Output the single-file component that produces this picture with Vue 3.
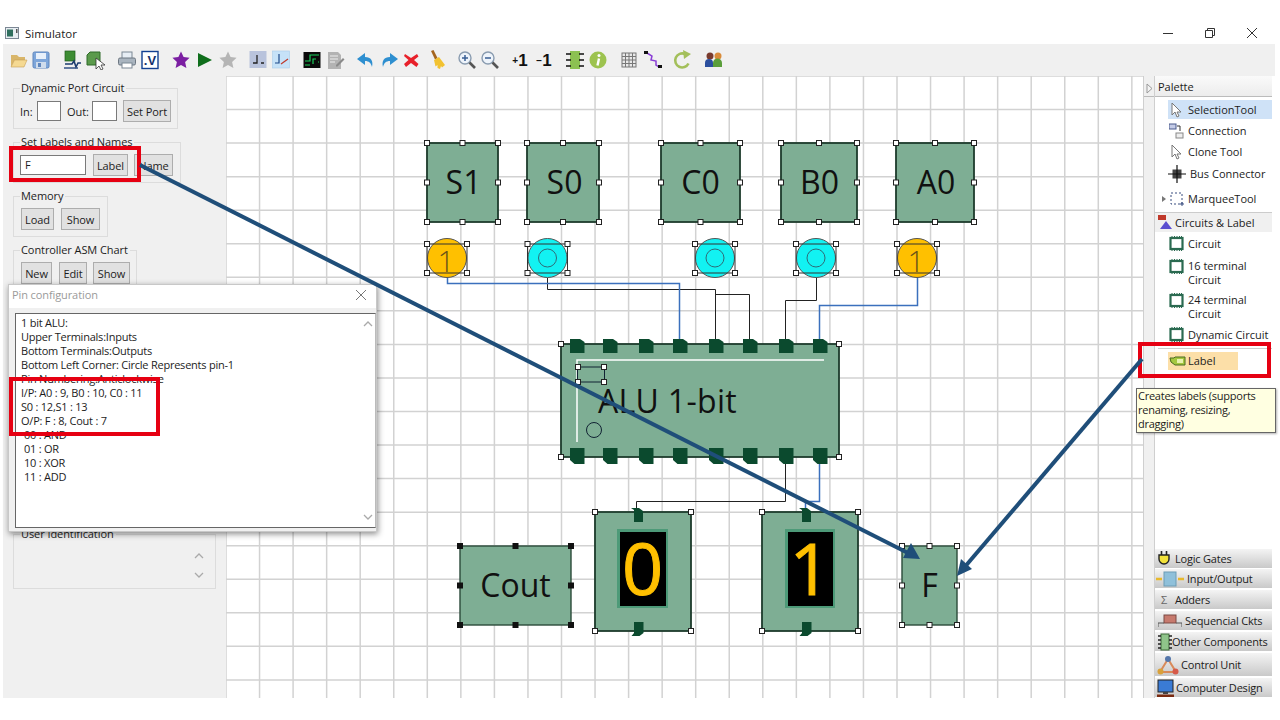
<script setup>
const centers = [19,41,72,95,127,150,181,205,228,258,281,312,335,365,390,411,437,467,490,520,544,575,598,629,653,683,714]
const art = [
 `<path d="M2 5h6l2 2h6v3H2z" fill="#d9b66a"/><path d="M2 17V8h12v2H6l-4 7z" fill="#d9b66a"/><path d="M2 17l3.500-7H18l-3 7z" fill="#f5d992" stroke="#c89f55" stroke-width=".6"/>`,
 `<rect x="2" y="2" width="16" height="16" rx="1.500" fill="#7ea6da" stroke="#5f86bd"/><rect x="5" y="3" width="10" height="6" fill="#e8f0fa"/><rect x="5" y="12" width="10" height="6" fill="#cfdcec"/><rect x="7" y="13" width="3" height="4" fill="#5f86bd"/>`,
 `<rect x="3" y="1" width="10" height="10" fill="#3d8c33" stroke="#1f5c1a" stroke-width=".7"/><path d="M3 14h7l2-3 2 6 2-4h3" fill="none" stroke="#1c3c6e" stroke-width="1.600"/><path d="M2 18h14" stroke="#24467d" stroke-width="1.400"/>`,
 `<path d="M2 5l3-3h10v13H2z" fill="#5b9a4c" stroke="#2f6b28"/><path d="M11 8v11l3-3 2 4 2-1-2-4h4z" fill="#fff" stroke="#333" stroke-width=".8"/>`,
 `<rect x="5" y="2" width="10" height="7" fill="#e6edf4" stroke="#7b8794"/><rect x="1.500" y="8" width="17" height="7" rx="1.500" fill="#a9b4bf" stroke="#6d7782"/><rect x="5" y="13" width="10" height="5" fill="#fff" stroke="#7b8794"/>`,
 `<rect x="2" y="1.500" width="16" height="17" fill="#fff" stroke="#123f91" stroke-width="1.400"/><text x="10" y="15" text-anchor="middle" font-family="Liberation Sans" font-weight="700" font-size="13" fill="#15306c">.V</text>`,
 `<path d="M10 1.500l2.600 5.600 6 .7-4.500 4.100 1.300 6L10 15l-5.400 2.900 1.300-6L1.400 7.800l6-.7z" fill="#7b1fa2"/>`,
 `<path d="M3 3l14 7-14 7z" fill="#0f6e1c"/>`,
 `<path d="M10 1.500l2.600 5.600 6 .7-4.500 4.100 1.300 6L10 15l-5.400 2.900 1.300-6L1.400 7.800l6-.7z" fill="#b5b5b5"/>`,
 `<rect x="1.500" y="1" width="17" height="17" fill="#b9c3dc"/><path d="M9 5v8H5M13 13h3" fill="none" stroke="#222" stroke-width="1.300"/>`,
 `<rect x="1.500" y="1" width="17" height="17" fill="#c6e2f8" stroke="#a8cdea" stroke-width=".6"/><path d="M8 4v9H4" fill="none" stroke="#1e4a8a" stroke-width="1.200"/><path d="M10 14l7-5" stroke="#c0392b" stroke-width="1.200"/>`,
 `<rect x="1.500" y="2" width="17" height="16" fill="#0a0a0a"/><path d="M3 11h5V5h9M3 15h5" fill="none" stroke="#18d05a" stroke-width="1.200"/><path d="M11 14V9h3M16 12h1" fill="none" stroke="#18d05a" stroke-width="1.200"/>`,
 `<path d="M3 2h10l3 3v14H3z" fill="#b3b3b3"/><path d="M5 6h8M5 9h8M5 12h5" stroke="#eee"/><path d="M11 15l7-7 1.500 1.500-7 7H11z" fill="#8a8a8a"/>`,
 `<path d="M10 3L2 9l8 6v-4c4 0 6 2 7 6 1.500-6-1-10-7-10z" fill="#2e8fd0"/>`,
 `<path d="M10 3l8 6-8 6v-4c-4 0-6 2-7 6-1.500-6 1-10 7-10z" fill="#2e8fd0"/>`,
 `<path d="M4 4l6 4 6-4 1.500 2.500L13 10l4.500 4-2 3L10 13l-5 4-2-3 4.500-4L3 6z" fill="#e8202a"/>`,
 `<path d="M4 1l2.500-1 4 8-2.500 1.500z" fill="#a5651f"/><path d="M7 10l5-3 6 8-3 2.500-1-1.500-1 3-2.500-1v-3l-2 1.500z" fill="#f2c230"/>`,
 `<circle cx="8" cy="8" r="6" fill="#eef4fb" stroke="#8a9cb0" stroke-width="1.400"/><path d="M12.500 12.500L18 18" stroke="#555" stroke-width="2.600"/><path d="M5 8h6M8 5v6" stroke="#3a5f95" stroke-width="1.500"/>`,
 `<circle cx="8" cy="8" r="6" fill="#eef4fb" stroke="#8a9cb0" stroke-width="1.400"/><path d="M12.500 12.500L18 18" stroke="#555" stroke-width="2.600"/><path d="M5 8h6" stroke="#3a5f95" stroke-width="1.500"/>`,
 `<text x="10" y="15.500" text-anchor="middle" font-family="Liberation Sans" font-weight="700" fill="#111"><tspan font-size="10" dy="-2">+</tspan><tspan font-size="17" dy="2">1</tspan></text>`,
 `<text x="10" y="15.500" text-anchor="middle" font-family="Liberation Sans" font-weight="700" fill="#111"><tspan font-size="10" dy="-2">−</tspan><tspan font-size="17" dy="2">1</tspan></text>`,
 `<rect x="5" y="1" width="10" height="18" fill="#8cc152"/><path d="M1 4h5M14 4h5M1 10h5M14 10h5M1 16h5M14 16h5" stroke="#111" stroke-width="1.400"/>`,
 `<circle cx="10" cy="10" r="8.500" fill="#9dc34f"/><circle cx="11" cy="5.500" r="1.500" fill="#fff"/><path d="M11 8.500l-1.500 7" stroke="#fff" stroke-width="2.400"/>`,
 `<rect x="3" y="3" width="14" height="14" fill="#e8e8e8" stroke="#777"/><path d="M6.500 3v14M10 3v14M13.500 3v14M3 6.500h14M3 10h14M3 13.500h14" stroke="#777"/>`,
 `<path d="M4 3l5 3-1 4 5 1 0 4 3 2" fill="none" stroke="#8a3fd6" stroke-width="1.500"/><rect x="1" y="1" width="4" height="3" fill="#111"/><rect x="15" y="15" width="4" height="3" fill="#111"/>`,
 `<path d="M15.500 13.500A7 7 0 1 1 12 4" fill="none" stroke="#a3bf5a" stroke-width="2.600"/><path d="M10 0l8 4-7 5z" fill="#a3bf5a"/>`,
 `<circle cx="6" cy="6" r="3.500" fill="#7a3b2e"/><circle cx="14" cy="6" r="3.500" fill="#d98b3a"/><path d="M1 17v-4a4 4 0 0 1 8 0v4z" fill="#2b4f9e"/><path d="M9 17v-4a4 4 0 0 1 9 0v4z" fill="#5a9e3a"/>`
]
const tools = centers.map((c, i) => ({ ml: c - (i ? centers[i - 1] : 3) - (i ? 20 : 10), html: art[i] }))

const step = 33.55
const vLines = Array.from({ length: 28 }, (_, i) => 226 + step * i)
const hLines = Array.from({ length: 19 }, (_, i) => 76 + step * i)

const handles = (x1, y1, x2, y2) => {
  const mx = (x1 + x2) / 2, my = (y1 + y2) / 2
  return [[x1,y1],[mx,y1],[x2,y1],[x1,my],[x2,my],[x1,y2],[mx,y2],[x2,y2]]
}
const inputs = [
  { t: 'S1', x1: 427, x2: 498, tx: 463.5 }, { t: 'S0', x1: 527, x2: 599, tx: 564.5 }, { t: 'C0', x1: 661, x2: 740, tx: 700.5 },
  { t: 'B0', x1: 781, x2: 857, tx: 819.5 }, { t: 'A0', x1: 896, x2: 974, tx: 936 }
].map(b => ({ ...b, y1: 143, y2: 222 }))
const labels = [
  { t: 'Cout', x1: 460, x2: 571, y1: 546, y2: 625, dark: true },
  { t: 'F', x1: 902, x2: 957, y1: 546, y2: 625, dark: false }
]
const probes = [
  { cx: 447, on: true }, { cx: 547.5, on: false }, { cx: 715, on: false }, { cx: 816, on: false }, { cx: 917, on: true }
]
const wiresBlue = ['M447.500 278V283.500H679.500V345', 'M917.500 278V305.500H819.500V345', 'M819.500 458V501.500H805.500V512']
const wiresDark = ['M547.500 278V289.500H715.500V345', 'M715.500 294.500H749.500V345', 'M816.500 278V300.500H785.500V345', 'M785.500 458V501.500H636.500V512']
const pinX = [570, 603, 639, 673, 709, 743, 779, 813]
const displays = [
  { d: '0', x1: 595, x2: 691, ox: 617, ow: 51, pin: 634 },
  { d: '1', x1: 762, x2: 858, ox: 785, ow: 50, pin: 802 }
]
const pinLines = ['1 bit ALU:', 'Upper Terminals:Inputs', 'Bottom Terminals:Outputs', 'Bottom Left Corner: Circle Represents pin-1', 'Pin Numbering:Anticlockwise', 'I/P: A0 : 9, B0 : 10, C0 : 11', 'S0 : 12,S1 : 13', 'O/P: F : 8, Cout : 7']
const opLines = ['00 : AND', '01 : OR', '10 : XOR', '11 : ADD']
const chipTools = [
  { t: 'Circuit', c: 'c1' }, { t: '16 terminal Circuit', c: 'two' }, { t: '24 terminal Circuit', c: 'two' }, { t: 'Dynamic Circuit', c: 'dyn' }
]
</script>

<template>
  <div class="app">
    <header class="title">
      <svg class="appicon" width="15" height="13" viewBox="0 0 15 13"><rect x=".5" y=".5" width="13" height="11" fill="#e8edf2" stroke="#7b8794"/><rect x="2" y="2.500" width="6" height="7" fill="#2f6f5e"/><rect x="11" y="2" width="1.500" height="4" fill="#555"/></svg>
      <span>Simulator</span>
      <div class="winbtns">
        <svg width="12" height="12" viewBox="0 0 12 12"><path d="M1 6.500h10" stroke="#333"/></svg>
        <svg width="12" height="12" viewBox="0 0 12 12"><path d="M1.500 3.500h7v7h-7zM3.500 3.500v-2h7v7h-2" fill="none" stroke="#333"/></svg>
        <svg width="12" height="12" viewBox="0 0 12 12"><path d="M1 1l10 10M11 1L1 11" stroke="#333"/></svg>
      </div>
    </header>

    <nav class="toolbar">
      <svg v-for="(t, i) in tools" :key="i" class="tool-ic" width="20" height="20" viewBox="0 0 20 20" :style="{ marginLeft: t.ml + 'px' }" v-html="t.html"></svg>
    </nav>

    <main class="main">
      <aside class="left">
        <fieldset class="grp g1">
          <legend>Dynamic Port Circuit</legend>
          <div class="row">
            <span class="lb-in">In:</span><span class="field w24"></span>
            <span class="lb-out">Out:</span><span class="field w25"></span>
            <button class="btn w48">Set Port</button>
          </div>
        </fieldset>
        <fieldset class="grp g2">
          <legend>Set Labels and Names</legend>
          <div class="row">
            <span class="field w66">F</span>
            <button class="btn w35 ml7">Label</button>
            <button class="btn w39">Name</button>
          </div>
        </fieldset>
        <fieldset class="grp g3">
          <legend>Memory</legend>
          <div class="row pl1">
            <button class="btn w33">Load</button>
            <button class="btn w39 ml7">Show</button>
          </div>
        </fieldset>
        <fieldset class="grp g4">
          <legend>Controller ASM Chart</legend>
          <div class="row pl1">
            <button class="btn w31">New</button>
            <button class="btn w28 ml7">Edit</button>
            <button class="btn w37">Show</button>
          </div>
        </fieldset>
        <fieldset class="grp g5">
          <legend>User Identification</legend>
          <div class="uid-scroll">
            <svg width="10" height="7" viewBox="0 0 10 7"><path d="M1 6l4-4 4 4" fill="none" stroke="#aaa" stroke-width="1.300"/></svg>
            <svg width="10" height="7" viewBox="0 0 10 7"><path d="M1 1l4 4 4-4" fill="none" stroke="#aaa" stroke-width="1.300"/></svg>
          </div>
        </fieldset>
      </aside>

      <section class="canvas">
        <svg class="board" width="917" height="622" viewBox="226 76 917 622">
          <line v-for="x in vLines" :key="'v' + x" :x1="x" :x2="x" y1="76" y2="698" class="gl" />
          <line v-for="y in hLines" :key="'h' + y" x1="226" x2="1143" :y1="y" :y2="y" class="gl" />

          <path v-for="d in wiresDark" :key="d" :d="d" class="w-dark" />
          <path v-for="d in wiresBlue" :key="d" :d="d" class="w-blue" />

          <g v-for="b in inputs" :key="b.t">
            <rect :x="b.x1" :y="b.y1" :width="b.x2 - b.x1" :height="b.y2 - b.y1" class="node" />
            <text :x="b.tx" y="194" class="big">{{ b.t }}</text>
            <rect v-for="(h, i) in handles(b.x1, b.y1, b.x2, b.y2)" :key="i" :x="h[0] - 2.500" :y="h[1] - 2.500" width="5" height="5" class="hd" />
          </g>

          <g v-for="p in probes" :key="p.cx">
            <circle :cx="p.cx" cy="258" r="19.500" :class="p.on ? 'on' : 'off'" />
            <circle v-if="!p.on" :cx="p.cx" cy="258" r="9" class="off-in" />
            <text v-if="p.on" :x="p.cx - 1" y="272" class="one">1</text>
            <rect :x="p.cx - 20" y="244" width="40" height="29" class="probe-box" />
            <rect v-for="h in [[-20,244],[20,244],[-20,273],[20,273]]" :key="h.join()" :x="p.cx + h[0] - 2.500" :y="h[1] - 2.500" width="5" height="5" class="hd" />
          </g>

          <g>
            <rect x="561" y="344" width="278" height="113" class="node" />
            <path v-for="x in pinX" :key="'t' + x" :d="`M${x} 339h10l4.500 3v11h-14.500z`" class="pin" />
            <path v-for="x in pinX" :key="'b' + x" :d="`M${x} 448h14.500v16h-10l-4.500-4z`" class="pin" />
            <path d="M824 360H577V442" class="chip-line" />
            <rect x="577.500" y="367" width="27" height="15" class="sel" />
            <rect v-for="h in [[578,367],[604,367],[578,382],[604,382]]" :key="h.join()" :x="h[0] - 2.500" :y="h[1] - 2.500" width="5" height="5" class="hd" />
            <circle cx="594" cy="430" r="7.500" class="sel" />
            <text x="667.500" y="413" class="big alu">ALU 1-bit</text>
            <rect v-for="h in [[561,344],[839,344],[561,457],[839,457]]" :key="h.join()" :x="h[0] - 2.500" :y="h[1] - 2.500" width="5" height="5" class="hd" />
          </g>

          <g v-for="l in labels" :key="l.t">
            <rect :x="l.x1" :y="l.y1" :width="l.x2 - l.x1" :height="l.y2 - l.y1" class="node thin" />
            <text :x="(l.x1 + l.x2) / 2" y="597" class="big">{{ l.t }}</text>
            <rect v-for="(h, i) in handles(l.x1, l.y1, l.x2, l.y2)" :key="i" :x="h[0] - 2.500" :y="h[1] - 2.500" width="5" height="5" :class="l.dark ? 'hd-dark' : 'hd'" />
          </g>

          <g v-for="d in displays" :key="d.d">
            <rect :x="d.x1" y="512" :width="d.x2 - d.x1" height="119" class="node" />
            <path :d="`M${d.pin} 522v-12l-3-2h8l4 3v11z`" class="pin" />
            <path :d="`M${d.pin} 622h9.500v11l-4 3h-8l2.500-3z`" class="pin" />
            <rect :x="d.ox" y="529" :width="d.ow" height="79" class="seg-o" />
            <rect :x="d.ox + 3" y="532" :width="d.ow - 5" height="74" class="seg-i" />
            <text :x="d.ox + d.ow / 2" y="595" class="digit">{{ d.d }}</text>
            <rect v-for="h in [[d.x1,512],[d.x2,512],[d.x1,631],[d.x2,631]]" :key="h.join()" :x="h[0] - 2.500" :y="h[1] - 2.500" width="5" height="5" class="hd" />
          </g>
        </svg>
      </section>

      <div class="split">
        <div class="split-head">
          <svg width="7" height="11" viewBox="0 0 7 11"><path d="M1 1l5 4.500L1 10z" fill="#f4f4f4" stroke="#999"/></svg>
        </div>
      </div>

      <aside class="palette">
        <div class="p-head">Palette</div>
        <div class="tool sel-blue">
          <svg width="15" height="16" viewBox="0 0 15 16"><path d="M3 1v12l3-3 2 5 2-1-2-4h4z" fill="#fff" stroke="#777"/></svg><span>SelectionTool</span>
        </div>
        <div class="tool">
          <svg width="15" height="16" viewBox="0 0 15 16"><rect x="0" y="1" width="7" height="5" fill="#c4cbe6" stroke="#4a5a8c"/><rect x="7" y="10" width="7" height="5" fill="#eee" stroke="#888"/><path d="M8 3h3v5" fill="none" stroke="#333"/></svg><span>Connection</span>
        </div>
        <div class="tool">
          <svg width="15" height="16" viewBox="0 0 15 16"><path d="M3 1v12l3-3 2 5 2-1-2-4h4z" fill="#fff" stroke="#777"/></svg><span>Clone Tool</span>
        </div>
        <div class="tool bus">
          <svg width="18" height="18" viewBox="0 0 18 18"><rect x="4.500" y="4.500" width="9" height="9" fill="#444"/><path d="M9 0v18M0 9h18" stroke="#111" stroke-width="1.200"/></svg><span>Bus Connector</span>
        </div>
        <div class="tool marquee">
          <svg class="caret" width="4" height="6" viewBox="0 0 4 6"><path d="M0 0l4 3-4 3z" fill="#777"/></svg>
          <svg width="15" height="16" viewBox="0 0 15 16"><rect x="1" y="2" width="11" height="11" fill="none" stroke="#3a4f80" stroke-dasharray="2 2"/><path d="M10 13h4M12 11v4" stroke="#3a4f80"/></svg><span>MarqueeTool</span>
        </div>
        <div class="p-sec">
          <svg width="15" height="15" viewBox="0 0 15 15"><rect x="0" y="0" width="8" height="5" fill="#c0392b"/><path d="M8 6l6 8H2z" fill="#5b4fd0"/></svg><span>Circuits &amp; Label</span>
        </div>
        <div v-for="c in chipTools" :key="c.t" class="tool" :class="c.c">
          <svg width="15" height="15" viewBox="0 0 15 15"><rect x="1.500" y="2" width="12" height="11" fill="#fff" stroke="#2a6a50" stroke-width="2.200"/><path d="M3 0v2M5.500 0v2M8 0v2M10.500 0v2M12.500 0v2M3 13v2M5.500 13v2M8 13v2M10.500 13v2M12.500 13v2" stroke="#2a6a50"/></svg><span>{{ c.t }}</span>
        </div>
        <div class="p-div"></div>
        <div class="tool sel-orange">
          <svg width="17" height="12" viewBox="0 0 17 12"><path d="M1 3h4l1-1h10v8H6L2 7z" fill="#a5c840" stroke="#4a6a20"/><rect x="8" y="4" width="6" height="4" fill="#e9f2b0"/></svg><span>Label</span>
        </div>
        <div class="p-fill"></div>
        <div class="drawer d-logic">
          <svg width="14" height="15" viewBox="0 0 14 15"><path d="M2 4h10v4a5 5 0 0 1-10 0z" fill="#f2e23a" stroke="#222" stroke-width="1.400"/><path d="M4.500 0v4M9.500 0v4" stroke="#222" stroke-width="1.600"/></svg><span>Logic Gates</span>
        </div>
        <div class="drawer d-io">
          <svg width="28" height="16" viewBox="0 0 28 16"><path d="M0 8h6M22 8h6" stroke="#e8b92c" stroke-width="2.400"/><rect x="8" y="1" width="12" height="14" fill="#8fc0da" stroke="#6c9cb5"/></svg><span>Input/Output</span>
        </div>
        <div class="drawer d-add">
          <span class="sigma">Σ</span><span>Adders</span>
        </div>
        <div class="drawer d-seq">
          <svg width="24" height="14" viewBox="0 0 24 14"><rect x="6" y="1" width="12" height="8" fill="#c77a6e" stroke="#7a4a44"/><path d="M0 13V9h6M24 13V9h-6" fill="none" stroke="#555"/></svg><span>Sequencial Ckts</span>
        </div>
        <div class="drawer d-other">
          <svg width="14" height="18" viewBox="0 0 14 18"><rect x="3" y="1" width="8" height="16" fill="#8fc48a" stroke="#3f6a3a"/><path d="M0 3h3M0 7h3M0 11h3M0 15h3M11 3h3M11 7h3M11 11h3M11 15h3" stroke="#222" stroke-width="1.300"/></svg><span>Other Components</span>
        </div>
        <div class="drawer d-cu">
          <svg width="22" height="20" viewBox="0 0 22 20"><path d="M11 4L3 17h16z" fill="none" stroke="#d98a5a" stroke-width="2"/><circle cx="11" cy="4" r="3" fill="#5577aa"/><circle cx="3.500" cy="16.500" r="3" fill="#d9a13a"/><circle cx="18.500" cy="16.500" r="3" fill="#d65a4a"/></svg><span>Control Unit</span>
        </div>
        <div class="drawer d-cd">
          <svg width="17" height="18" viewBox="0 0 17 18"><rect x="1" y="1" width="15" height="12" fill="#3a7bd5" stroke="#222"/><path d="M0 17h17" stroke="#7a2a10" stroke-width="3"/><path d="M6 13h5v2H6z" fill="#444"/></svg><span>Computer Design</span>
        </div>
      </aside>
    </main>

    <section class="dialog">
      <div class="d-title">
        <span>Pin configuration</span>
        <svg width="12" height="12" viewBox="0 0 12 12"><path d="M1 1l10 10M11 1L1 11" stroke="#777"/></svg>
      </div>
      <div class="d-body">
        <div class="d-text">
          <div class="d-lines">
            <div v-for="l in pinLines" :key="l">{{ l }}</div>
            <div v-for="l in opLines" :key="l" class="op">{{ l }}</div>
          </div>
          <div class="d-scroll">
            <svg width="10" height="7" viewBox="0 0 10 7"><path d="M1 6l4-4 4 4" fill="none" stroke="#aaa" stroke-width="1.300"/></svg>
            <svg width="10" height="7" viewBox="0 0 10 7"><path d="M1 1l4 4 4-4" fill="none" stroke="#aaa" stroke-width="1.300"/></svg>
          </div>
        </div>
      </div>
    </section>

    <div class="tooltip">Creates labels (supports renaming, resizing, dragging)</div>

    <svg class="notes" width="1280" height="720" viewBox="0 0 1280 720">
      <rect x="11" y="148" width="128" height="32" class="red" />
      <rect x="11" y="379" width="147" height="55" class="red" />
      <rect x="1140" y="344" width="129" height="32" class="red" />
      <path d="M140 165L908 553" class="arrow" />
      <path d="M920 559L903 558L911 543z" class="head" />
      <path d="M1142 359L963 569" class="arrow" />
      <path d="M957 576L961 559L972 569z" class="head" />
    </svg>
  </div>
</template>

<style>
html, body { margin: 0; background: #fff; overflow: hidden; }
</style>

<style scoped>
.app {
  position: relative; width: 1280px; height: 720px; overflow: hidden; background: #fff;
  display: flex; flex-direction: column;
  font-family: "Open Sans", "Noto Sans", sans-serif; font-size: 11px; color: #1c1c1c;
}
.title { height: 44px; display: flex; align-items: center; padding: 22px 0 0 5px; box-sizing: border-box; font-size: 11.500px; color: #222; }
.appicon { margin-right: 5px; }
.winbtns { margin-left: auto; display: flex; gap: 30px; padding-right: 22px; }
.toolbar { height: 32px; margin: 0 5px 0 3px; background: #f0f0f0; display: flex; align-items: center; }
.tool-ic { flex: none; }
.main { height: 622px; margin: 0 8px 0 3px; display: flex; background: #f0f0f0; }

.left { width: 223px; flex: none; padding: 4px 0 0 10px; box-sizing: border-box; display: flex; flex-direction: column; align-items: flex-start; letter-spacing: -.08px; }
.grp { margin: 5px 0 0; padding: 4px 0 6px 6px; border: 1px solid #dcdcdc; box-sizing: border-box; min-width: 0; }
.grp legend { margin-left: 0; padding: 0 2px 0 1px; height: 16px; line-height: 16px; white-space: nowrap; }
.g1 { margin-top: 0; width: 165px; }
.g2 { width: 168px; }
.g3 { width: 95px; }
.g4 { width: 124px; }
.g5 { width: 203px; height: 63px; margin-top: 235px; padding: 0 0 0 6px; position: relative; }
.uid-scroll { position: absolute; right: 11px; top: 10px; height: 27px; display: flex; flex-direction: column; justify-content: space-between; }
.row { display: flex; align-items: center; height: 22px; gap: 6px; }
.pl1 { padding-left: 1px; }
.ml7 { margin-left: 1px; }
.lb-in { width: 11px; }
.lb-out { width: 19px; }
.field { background: #fff; border: 1px solid #7a7a7a; height: 20px; line-height: 18px; box-sizing: border-box; padding-left: 4px; display: block; flex: none; }
.btn { height: 22px; background: #e1e1e1; border: 1px solid #adadad; padding: 0; font: inherit; letter-spacing: inherit; color: inherit; flex: none; white-space: nowrap; }
.w24 { width: 24px; } .w25 { width: 25px; } .w28 { width: 28px; } .w31 { width: 31px; } .w33 { width: 33px; } .w35 { width: 35px; } .w37 { width: 37px; } .w39 { width: 39px; } .w48 { width: 48px; } .w66 { width: 66px; }

.canvas { width: 917px; flex: none; background: #fff; }
.board { display: block; }
.gl { stroke: #d2d2d2; stroke-width: 1.500; }
.w-blue { fill: none; stroke: #3b70bd; stroke-width: 1.500; }
.w-dark { fill: none; stroke: #222; stroke-width: 1; }
.node { fill: #7eae94; stroke: #1d3b2c; stroke-width: 1.800; }
.node.thin { stroke-width: 1.400; stroke: #2b4a3a; }
.hd { fill: #fff; stroke: #222; stroke-width: 1; }
.hd-dark { fill: #111; stroke: #111; stroke-width: 1; }
.big { font-size: 32px; text-anchor: middle; fill: #111; }
.alu { letter-spacing: .3px; }
.on { fill: #ffc000; stroke: #555; stroke-width: 1; }
.off { fill: #12f2f2; stroke: #555; stroke-width: 1; }
.off-in { fill: none; stroke: #2f6b77; stroke-width: 1; }
.one { font-size: 30px; font-weight: 300; text-anchor: middle; fill: #6b5318; }
.probe-box { fill: none; stroke: #333; stroke-width: 1; }
.pin { fill: #0b4a2e; }
.chip-line { fill: none; stroke: #fff; stroke-width: 1.500; }
.sel { fill: none; stroke: #123; stroke-width: 1; }
.seg-o { fill: #4d9a78; }
.seg-i { fill: #000; }
.digit { font-size: 72px; text-anchor: middle; fill: #ffc000; stroke: #ffc000; stroke-width: 1px; font-family: "Open Sans", sans-serif; }

.split { width: 12px; flex: none; border-left: 1px solid #cfcfcf; border-right: 1px solid #cfcfcf; box-sizing: border-box; }
.split-head { height: 21px; border-bottom: 1px solid #bbb; padding: 6px 0 0 2px; box-sizing: border-box; }
.palette { width: 117px; flex: none; background: #fff; display: flex; flex-direction: column; font-size: 11px; }
.p-head { height: 21px; line-height: 21px; padding-left: 3px; margin-bottom: 1px; background: linear-gradient(#fafafa, #ececec); border-bottom: 1px solid #bbb; box-sizing: border-box; }
.tool { height: 21.500px; display: flex; align-items: center; gap: 4px; margin-left: 13px; padding-left: 1px; box-sizing: border-box; line-height: 14px; flex: none; }
.tool svg { flex: none; }
.sel-blue { background: #cfe2f7; height: 19px; margin-top: 2px; margin-bottom: 1px; }
.bus { margin-left: 12px; }
.marquee { margin: 3px 0 0 6px; gap: 3px; height: 22px; }
.caret { margin-right: 1px; }
.p-sec { height: 20px; margin-top: 2px; border-top: 1px solid #ccc; background: #f0f0f0; display: flex; align-items: center; gap: 2px; padding-left: 3px; box-sizing: border-box; flex: none; }
.c1 { height: 20px; margin-top: 2px; }
.two { height: 28px; margin-top: 5px; align-items: flex-start; }
.two + .two { margin-top: 6px; }
.two span { width: 70px; }
.dyn { height: 20px; margin-top: 4px; }
.p-div { height: 1px; background: #ccc; margin: 3px 0 3px 3px; flex: none; }
.sel-orange { background: #fcdfa8; width: 70px; height: 18px; gap: 2px; padding-left: 1px; }
.p-fill { flex: 1; }
.drawer { height: 19px; margin-bottom: 2px; background: linear-gradient(#f4f4f4, #c9c9c9); display: flex; align-items: center; gap: 3px; padding-left: 1px; box-sizing: border-box; flex: none; white-space: nowrap; letter-spacing: -.2px; }
.drawer svg { flex: none; }
.d-logic { padding-left: 2px; gap: 4px; margin-top: 1px; margin-bottom: 1px; }
.d-add { padding-left: 6px; gap: 3px; }
.sigma { color: #666; width: 11px; }
.d-seq { gap: 3px; padding-left: 3px; }
.d-other { padding-left: 3px; gap: 0; }
.d-cu { height: 23px; padding-left: 2px; gap: 2px; }
.d-cd { margin-bottom: 1px; padding-left: 2px; gap: 2px; }

.dialog { position: absolute; left: 8px; top: 284px; width: 369px; height: 248px; background: #f0f0f0; box-shadow: 1px 2px 6px rgba(0,0,0,.45); border: 1px solid #c8c8c8; box-sizing: border-box; display: flex; flex-direction: column; }
.d-title { height: 23px; background: #fff; display: flex; align-items: center; justify-content: space-between; padding: 0 9px 4px 3px; box-sizing: border-box; color: #9a9a9a; flex: none; letter-spacing: -.1px; }
.d-body { flex: 1; padding: 5px 0 3px 6px; display: flex; min-height: 0; }
.d-text { flex: 1; background: #fff; border: 1px solid #666; border-right-color: #bbb; display: flex; }
.d-lines { flex: 1; padding: 2px 0 0 5px; line-height: 14px; color: #1c1c1c; letter-spacing: -.23px; }
.op { padding-left: 3px; }
.d-scroll { width: 14px; padding: 6px 0; display: flex; flex-direction: column; justify-content: space-between; align-items: center; }

.tooltip { position: absolute; left: 1136px; top: 388px; width: 140px; height: 45px; box-sizing: border-box; background: #ffffe1; border: 1px solid #666; padding: 0 1px; line-height: 14px; font-size: 11px; letter-spacing: -.25px; box-shadow: 1px 1px 2px rgba(0,0,0,.3); }

.notes { position: absolute; left: 0; top: 0; pointer-events: none; }
.red { fill: none; stroke: #e60012; stroke-width: 4; }
.arrow { fill: none; stroke: #1f4e79; stroke-width: 4; }
.head { fill: #1f4e79; }
</style>
